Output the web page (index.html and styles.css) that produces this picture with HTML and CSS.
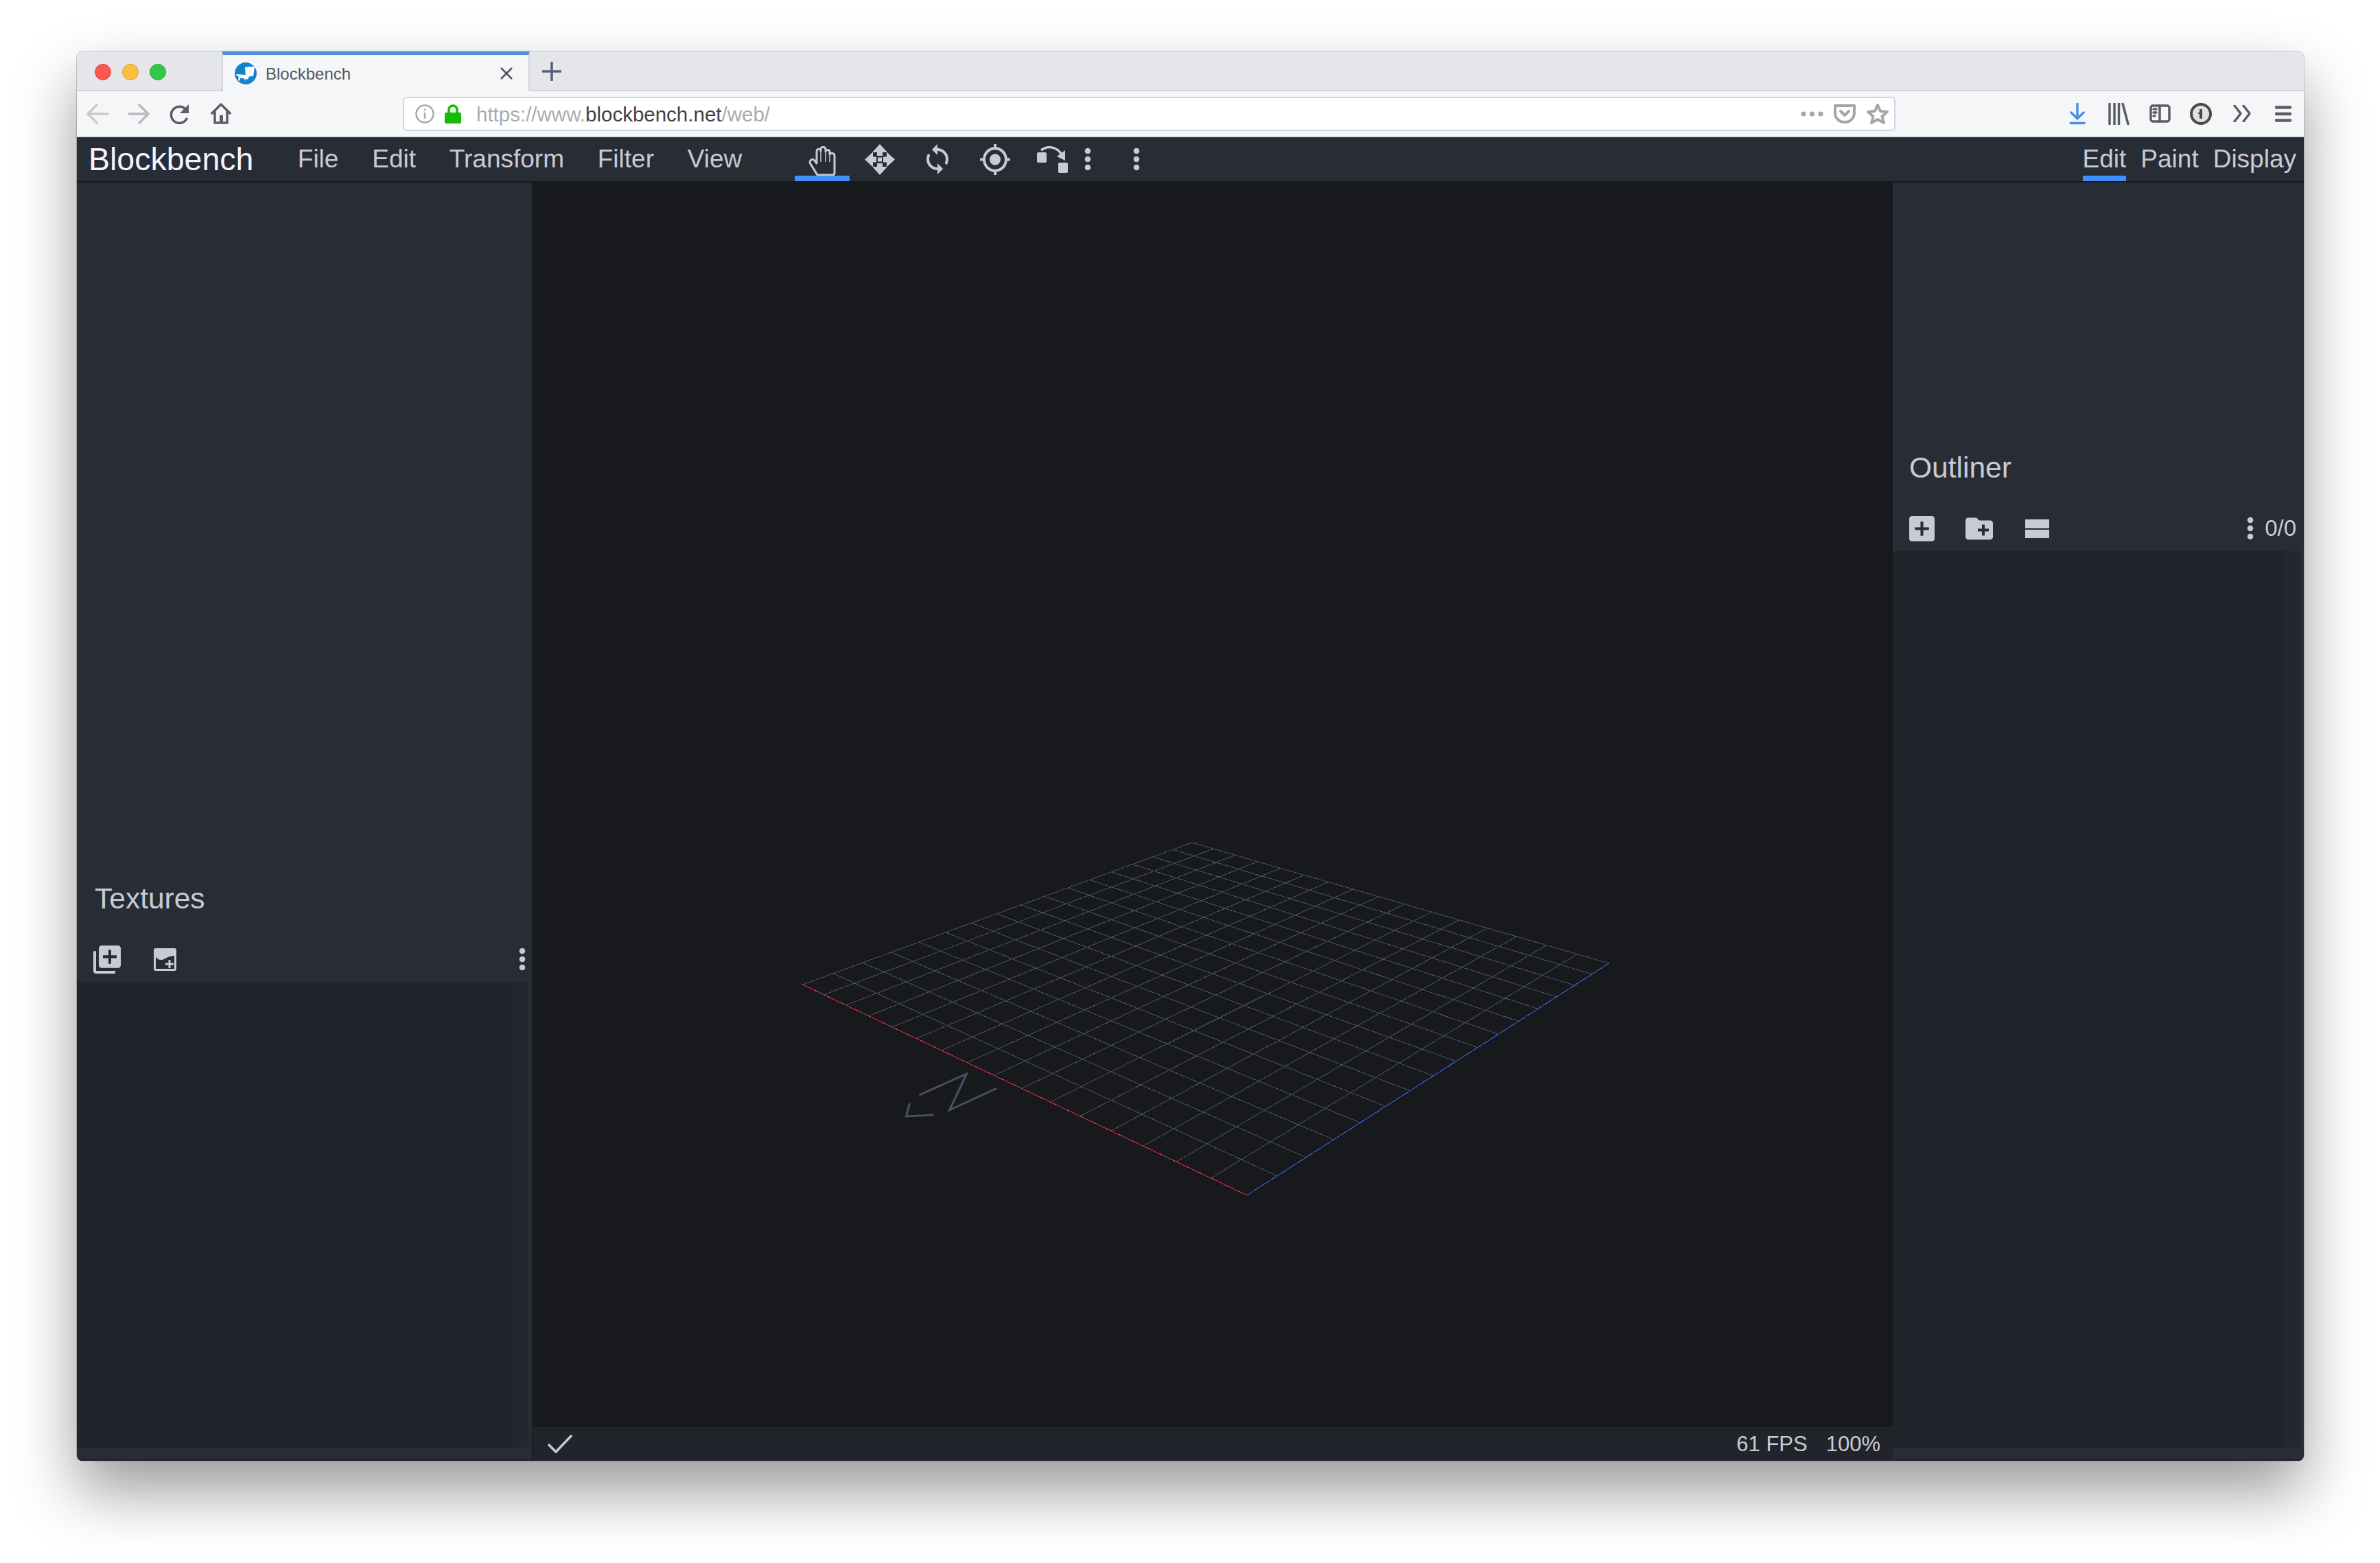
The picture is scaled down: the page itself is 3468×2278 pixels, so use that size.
FILE: index.html
```html
<!DOCTYPE html>
<html lang="en">
<head>
    <meta charset="UTF-8">
    <title>Blockbench</title>
    <link rel="stylesheet" href="styles.css">
</head>
<body>
    <div class="window">
        <!-- browser chrome -->
        <div class="tabstrip">
            <div class="traffic">
                <span class="light light-red"></span>
                <span class="light light-yellow"></span>
                <span class="light light-green"></span>
            </div>
            <div class="tab">
                <svg class="favicon" viewBox="0 0 32 32">
                    <circle cx="16" cy="16" r="16" fill="#1583cc"/>
                    <path fill="#fff" d="M15 7l14-1-2 14-11 1zM2 17l13 1 7 1-3 6-3-2v4l-3-4-5 0-1 4-2-1 1-5-3-2z"/>
                </svg>
                <span class="tab-title">Blockbench</span>
                <svg class="tab-close" viewBox="0 0 20 20"><path d="M2 2l16 16M18 2L2 18"/></svg>
            </div>
            <svg class="tab-new" viewBox="0 0 28 28"><path d="M14 1v26M1 14h26"/></svg>
        </div>

        <div class="navbar">
            <div class="nav-btn">
                <svg class="stroke-off" width="33" height="32" viewBox="0 0 33 32"><path d="M31 16H3M15 3L2 16l13 13"/></svg>
            </div>
            <div class="nav-btn">
                <svg class="stroke-off2" width="31" height="32" viewBox="0 0 31 32"><path d="M1 16h27M16 3l13 13-13 13"/></svg>
            </div>
            <div class="nav-btn">
                <svg class="stroke-grey" width="30" height="30" viewBox="0 0 30 30"><path d="M25 22a12 12 0 1 1-2-14"/><path class="solid" d="M28 1v13H15z"/></svg>
            </div>
            <div class="nav-btn">
                <svg class="stroke-grey" width="30" height="31" viewBox="0 0 30 31"><path d="M2 15L15 2l13 13M6 12v17h18V12"/><rect class="solid" x="13" y="18" width="5" height="11"/></svg>
            </div>

            <div class="urlbar">
                <svg class="url-info" viewBox="0 0 28 28">
                    <circle cx="14" cy="14" r="12.5"/>
                    <path d="M14 12v9"/>
                    <circle class="solid" cx="14" cy="8" r="1.6"/>
                </svg>
                <svg class="url-lock" viewBox="0 0 24 28">
                    <path d="M6 13V8a6 6 0 0 1 12 0v5"/>
                    <rect class="solid" y="12" width="24" height="16" rx="2"/>
                </svg>
                <div class="url-text">https://www.<span class="url-host">blockbench.net</span>/web/</div>
                <div class="url-action">
                    <svg width="33" height="8" viewBox="0 0 33 8" class="solid-grey"><circle cx="4" cy="4" r="3.6"/><circle cx="16.5" cy="4" r="3.6"/><circle cx="29" cy="4" r="3.6"/></svg>
                </div>
                <div class="url-action">
                    <svg class="stroke-light" width="32" height="28" viewBox="0 0 32 28"><path d="M2 2h28v11a14 13 0 0 1-28 0zM10 10l6 6 6-6"/></svg>
                </div>
                <div class="url-action">
                    <svg class="stroke-light" width="32" height="31" viewBox="0 0 32 31"><path d="M16 3l4 9 10 1-7.500 6.500L25 29l-9-5-9 5 2.500-9.500L2 13l10-1z"/></svg>
                </div>
            </div>

            <div class="nav-btn">
                <svg class="stroke-blue" width="24" height="32" viewBox="0 0 24 32"><path d="M12 0v23M3 14l9 9 9-9M2 29.500h20"/></svg>
            </div>
            <div class="nav-btn">
                <svg class="stroke-grey" width="31" height="32" viewBox="0 0 31 32"><path d="M2 1v30M9 1v30M15.500 1v30M21 1l8 30"/></svg>
            </div>
            <div class="nav-btn">
                <svg class="stroke-grey" width="31" height="27" viewBox="0 0 31 27"><rect x="2" y="2" width="27" height="23" rx="3"/><path d="M15 2v23M6 7h4M6 12h4M6 17h2"/></svg>
            </div>
            <div class="nav-btn">
                <svg width="32" height="32" viewBox="0 0 32 32"><circle cx="16" cy="16" r="14" fill="#e2e2e2" stroke="#4a4a4a" stroke-width="4"/><path fill="#4a4a4a" d="M14 9h4v14h-4zM12 14h3v2h-3z"/></svg>
            </div>
            <div class="nav-btn">
                <svg class="stroke-grey" width="27" height="25" viewBox="0 0 27 25"><path d="M2 1l9 11.500L2 24M15 1l9 11.500L15 24"/></svg>
            </div>
            <div class="nav-btn">
                <svg class="stroke-grey stroke-fat" width="24" height="24" viewBox="0 0 24 24"><path d="M2 2.500h20M2 12h20M2 21.500h20"/></svg>
            </div>
        </div>

        <!-- blockbench app -->
        <div class="app">
            <div class="menubar">
                <div class="logo">Blockbench</div>
                <div class="menu">
                    <div class="menu-item">File</div>
                    <div class="menu-item">Edit</div>
                    <div class="menu-item">Transform</div>
                    <div class="menu-item">Filter</div>
                    <div class="menu-item">View</div>
                </div>
                <div class="tools">
                    <div class="tool tool-active">
                        <svg class="hand" width="40" height="43" viewBox="0 0 40 43">
                            <path d="M13 42L3 26c-3-5 3-9 6-5l3 4V8c0-5 6-5 6-1V5c0-5 7-5 7 0v3c1-4 6-3 6 1v3c2-3 7-2 7 2v24c0 2-1 4-3 4z"/>
                            <path class="hand-thin" d="M18 7v16M25 7v16M31 10v13"/>
                        </svg>
                    </div>
                    <div class="tool">
                        <svg class="icon" width="44" height="45" viewBox="0 0 44 45">
                            <path d="M22 0l11 12h-7v5h-8v-5h-7zM22 45l11-12h-7v-5h-8v5h-7zM0 22.500l12-11v7h5v8h-5v7zM44 22.500l-12-11v7h-5v8h5v7z"/>
                            <rect x="19" y="19.500" width="6" height="6"/>
                        </svg>
                    </div>
                    <div class="tool">
                        <svg class="icon" width="32" height="44" viewBox="4 1 16 22" preserveAspectRatio="none">
                            <path d="M12 4V1L8 5l4 4V6c3.310 0 6 2.690 6 6 0 1.010-.25 1.970-.7 2.800l1.460 1.460C19.540 15.030 20 13.570 20 12c0-4.420-3.580-8-8-8zm0 14c-3.310 0-6-2.690-6-6 0-1.010.25-1.970.7-2.800L5.240 7.740C4.460 8.970 4 10.430 4 12c0 4.420 3.580 8 8 8v3l4-4-4-4v3z"/>
                        </svg>
                    </div>
                    <div class="tool">
                        <svg class="icon" width="44" height="45" viewBox="1 1 22 22" preserveAspectRatio="none">
                            <path d="M12 8c-2.210 0-4 1.790-4 4s1.790 4 4 4 4-1.790 4-4-1.790-4-4-4zm8.940 3c-.46-4.170-3.770-7.480-7.940-7.940V1h-2v2.060C6.830 3.520 3.520 6.830 3.060 11H1v2h2.060c.46 4.170 3.770 7.480 7.940 7.940V23h2v-2.060c4.170-.46 7.480-3.770 7.940-7.940H23v-2h-2.060zM12 19c-3.870 0-7-3.130-7-7s3.130-7 7-7 7 3.130 7 7-3.130 7-7 7z"/>
                        </svg>
                    </div>
                    <div class="tool">
                        <svg class="icon" width="45" height="39" viewBox="0 0 45 39">
                            <rect y="9" width="14" height="15" rx="2"/>
                            <rect x="31" y="24" width="14" height="15" rx="2"/>
                            <path class="pivot-arc" d="M6 6C15-1 28 0 36 12"/>
                            <path d="M41 6v15L29 15z"/>
                        </svg>
                    </div>
                    <svg class="dots tool-dots" viewBox="0 0 10 34"><circle cx="5" cy="5" r="4.300"/><circle cx="5" cy="17" r="4.300"/><circle cx="5" cy="29" r="4.300"/></svg>
                    <svg class="dots tool-dots tool-dots-last" viewBox="0 0 10 34"><circle cx="5" cy="5" r="4.300"/><circle cx="5" cy="17" r="4.300"/><circle cx="5" cy="29" r="4.300"/></svg>
                </div>
                <div class="modes">
                    <div class="mode mode-active">Edit</div>
                    <div class="mode">Paint</div>
                    <div class="mode">Display</div>
                </div>
            </div>

            <div class="workspace">
                <div class="panel panel-left">
                    <div class="panel-head">
                        <h3 class="panel-title">Textures</h3>
                        <div class="panel-tools">
                            <div class="panel-btn">
                                <svg class="icon" width="40" height="41" viewBox="2 2 20 20" preserveAspectRatio="none">
                                    <path d="M4 6H2v14c0 1.100.9 2 2 2h14v-2H4V6zm16-4H8c-1.100 0-2 .9-2 2v12c0 1.100.9 2 2 2h12c1.100 0 2-.9 2-2V4c0-1.100-.9-2-2-2zm-1 9h-4v4h-2v-4H9V9h4V5h2v4h4v2z"/>
                                </svg>
                            </div>
                            <div class="panel-btn">
                                <svg width="33" height="33" viewBox="0 0 33 33">
                                    <rect class="icon-fill" width="33" height="33" rx="3"/>
                                    <path class="icon-cut" d="M3 13c4 5 9 5 14 2 5-3 9-4 13-4v19H3z"/>
                                    <path class="icon-plus" d="M23 17v12M17 23h12"/>
                                </svg>
                            </div>
                            <svg class="dots panel-dots" viewBox="0 0 10 34"><circle cx="5" cy="5" r="4.300"/><circle cx="5" cy="17" r="4.300"/><circle cx="5" cy="29" r="4.300"/></svg>
                        </div>
                    </div>
                    <div class="panel-list"></div>
                </div>

                <div class="center">
                    <div class="preview">
                        <svg class="grid" id="grid" viewBox="777 266 1980 1814">
                            <path class="gizmo" d="M1339 1596l69-31-25 53 69-32M1325 1608l-5 19 40-2"/>
                        </svg>
                    </div>
                    <div class="statusbar">
                        <svg class="status-check" width="37" height="27" viewBox="0 0 37 27"><path d="M1 14l11 11L35 1"/></svg>
                        <div class="status-fps">61 FPS</div>
                        <div class="status-zoom">100%</div>
                    </div>
                </div>

                <div class="panel panel-right">
                    <div class="panel-head">
                        <h3 class="panel-title">Outliner</h3>
                        <div class="panel-tools">
                            <div class="panel-btn">
                                <svg class="icon" width="37" height="37" viewBox="3 3 18 18">
                                    <path d="M19 3H5c-1.110 0-2 .9-2 2v14c0 1.100.89 2 2 2h14c1.100 0 2-.9 2-2V5c0-1.100-.9-2-2-2zm-2 10h-4v4h-2v-4H7v-2h4V7h2v4h4v2z"/>
                                </svg>
                            </div>
                            <div class="panel-btn">
                                <svg class="icon" width="40" height="33" viewBox="2 4 20 16">
                                    <path d="M20 6h-8l-2-2H4c-1.110 0-1.990.89-1.990 2L2 18c0 1.110.89 2 2 2h16c1.110 0 2-.89 2-2V8c0-1.110-.89-2-2-2zm-1 8h-3v3h-2v-3h-3v-2h3V9h2v3h3v2z"/>
                                </svg>
                            </div>
                            <div class="panel-btn">
                                <svg class="icon" width="35" height="27" viewBox="0 0 35 27"><rect width="35" height="13"/><rect y="15" width="35" height="12"/></svg>
                            </div>
                            <svg class="dots panel-dots" viewBox="0 0 10 34"><circle cx="5" cy="5" r="4.300"/><circle cx="5" cy="17" r="4.300"/><circle cx="5" cy="29" r="4.300"/></svg>
                            <div class="panel-count">0/0</div>
                        </div>
                    </div>
                    <div class="panel-list"></div>
                </div>
            </div>
        </div>
    </div>
    <script src="grid.js"></script>
</body>
</html>
```

FILE: styles.css
```css
* {
    box-sizing: border-box;
}

html, body {
    height: 100%;
}

body {
    margin: 0;
    padding: 75px 111px 149px 112px;
    background: #ffffff;
    font-family: 'Liberation Sans', sans-serif;
    color: #cacad4;
}

svg {
    display: block;
    flex: none;
}

.window {
    display: flex;
    flex-direction: column;
    height: 100%;
    border-radius: 10px 10px 8px 8px;
    overflow: hidden;
    box-shadow: 0 44px 90px rgba(0, 0, 0, 0.4), 0 0 0 1px rgba(0, 0, 0, 0.18);
}

/* browser chrome */
.tabstrip {
    display: flex;
    align-items: stretch;
    height: 58px;
    background: #e5e6ea;
    border-bottom: 2px solid #d2d3d7;
}

.traffic {
    display: flex;
    align-items: center;
    gap: 16px;
    width: 211px;
    padding: 4px 0 0 26px;
}

.light {
    width: 24px;
    height: 24px;
    border-radius: 50%;
}

.light-red {
    background: #fc5753;
    border: 1px solid #df4744;
}

.light-yellow {
    background: #fdbc40;
    border: 1px solid #de9f34;
}

.light-green {
    background: #33c748;
    border: 1px solid #27aa35;
}

.tab {
    display: flex;
    align-items: center;
    width: 449px;
    height: 58px;
    padding-left: 17px;
    background: #f5f6f8;
    border-top: 5px solid #4f90e3;
    border-left: 2px solid #d2d3d7;
    border-right: 2px solid #d2d3d7;
}

.favicon {
    width: 32px;
    height: 32px;
}

.tab-title {
    margin-left: 13px;
    padding-top: 2px;
    font-size: 24px;
    color: #54565f;
}

.tab-close {
    width: 20px;
    height: 20px;
    margin-left: auto;
    margin-right: 22px;
    fill: none;
    stroke: #55575f;
    stroke-width: 2.5;
}

.tab-new {
    width: 28px;
    height: 28px;
    margin: 15px 0 0 18px;
    fill: none;
    stroke: #56607a;
    stroke-width: 3.5;
    stroke-linecap: round;
}

.navbar {
    display: flex;
    align-items: center;
    height: 67px;
    background: #f5f6f8;
    border-bottom: 2px solid #e2e3e7;
}

.nav-btn {
    display: flex;
    align-items: center;
    justify-content: center;
    width: 60px;
    height: 100%;
}

.stroke-off, .stroke-off2, .stroke-grey, .stroke-light, .stroke-blue {
    fill: none;
    stroke-width: 3.5;
    stroke-linecap: round;
    stroke-linejoin: round;
}

.stroke-off {
    stroke: #c9cacd;
}

.stroke-off2 {
    stroke: #b8b9bd;
}

.stroke-grey {
    stroke: #5b5d67;
}

.stroke-grey .solid {
    fill: #5b5d67;
    stroke: none;
}

.stroke-fat {
    stroke-width: 4.5;
}

.stroke-light {
    stroke: #a4a6ab;
    stroke-width: 4;
}

.stroke-blue {
    stroke: #4a90e6;
}

.solid-grey {
    fill: #a4a6ab;
}

.urlbar {
    display: flex;
    align-items: center;
    flex: 1;
    height: 50px;
    margin: 0 235px;
    padding-left: 16px;
    background: #ffffff;
    border: 2px solid #ced5e3;
    border-radius: 6px;
}

.url-info {
    width: 28px;
    height: 28px;
    fill: none;
    stroke: #a6a8ad;
    stroke-width: 2.5;
}

.url-info .solid {
    fill: #a6a8ad;
    stroke: none;
}

.url-lock {
    width: 24px;
    height: 28px;
    margin-left: 15px;
    fill: none;
    stroke: #12bc00;
    stroke-width: 3.5;
}

.url-lock .solid {
    fill: #12bc00;
    stroke: none;
}

.url-text {
    flex: 1;
    margin-left: 22px;
    padding-top: 2px;
    font-size: 29.5px;
    color: #a9abb1;
}

.url-host {
    color: #3f4149;
}

.url-action {
    display: flex;
    align-items: center;
    justify-content: center;
    width: 48px;
}

/* app */
.app {
    display: flex;
    flex-direction: column;
    flex: 1;
    min-height: 0;
    background: #282c34;
}

.menubar {
    display: flex;
    align-items: stretch;
    height: 66px;
    padding-left: 17px;
    background: #282c34;
    border-bottom: 2px solid #181a1f;
    font-size: 37px;
    line-height: 64px;
}

.logo {
    font-size: 46.5px;
    color: #f4f3ff;
}

.menu {
    display: flex;
    margin-left: 40px;
}

.menu-item {
    padding: 0 24.4px;
}

.tools {
    display: flex;
    align-items: stretch;
    margin-left: 50px;
}

.tool {
    display: flex;
    align-items: center;
    justify-content: center;
    width: 80px;
    height: 64px;
    margin: 0 2px;
}

.tool-active {
    align-items: flex-start;
    padding-top: 13px;
    border-bottom: 8px solid #3e90ff;
}

.hand {
    fill: none;
    stroke: #cacad4;
    stroke-width: 3;
    stroke-linejoin: round;
}

.hand-thin {
    stroke-width: 1.5;
}

.icon {
    fill: #cacad4;
}

.pivot-arc {
    fill: none;
    stroke: #cacad4;
    stroke-width: 3.5;
}

.icon-fill {
    fill: #cacad4;
}

.icon-cut {
    fill: #282c34;
}

.icon-plus {
    fill: none;
    stroke: #cacad4;
    stroke-width: 3;
}

.dots {
    width: 10px;
    height: 34px;
    fill: #cacad4;
}

.tool-dots {
    align-self: center;
    margin-left: 4px;
}

.tool-dots-last {
    margin-left: 61px;
}

.modes {
    display: flex;
    gap: 21px;
    margin-left: auto;
    padding-right: 11px;
}

.mode {
    height: 64px;
}

.mode-active {
    border-bottom: 8px solid #3e90ff;
}

.workspace {
    display: flex;
    flex: 1;
    min-height: 0;
}

.panel {
    display: flex;
    flex-direction: column;
    flex: none;
    padding-bottom: 17px;
    background: #282c34;
    border-bottom: 2px solid #1c1f25;
}

.panel-left {
    width: 663px;
}

.panel-right {
    width: 599px;
}

.panel-left .panel-head {
    height: 1165px;
}

.panel-right .panel-head {
    height: 537px;
}

.panel-head {
    display: flex;
    flex-direction: column;
    justify-content: flex-end;
    flex: none;
}

.panel-title {
    margin: 0 0 30px 26px;
    font-size: 42.5px;
    font-weight: normal;
    line-height: 50px;
}

.panel-right .panel-title {
    margin-left: 24px;
}

.panel-tools {
    display: flex;
    align-items: center;
    height: 66px;
}

.panel-left .panel-tools {
    padding: 0 9px 0 2px;
}

.panel-right .panel-tools {
    padding-right: 11px;
}

.panel-btn {
    display: flex;
    align-items: center;
    justify-content: center;
    width: 84px;
}

.panel-dots {
    margin-left: auto;
}

.panel-count {
    margin-left: 16px;
    font-size: 33px;
}

.panel-list {
    flex: 1;
    margin-right: 5px;
    background: #21252b;
    border-right: 22px solid #23272e;
}

.center {
    display: flex;
    flex-direction: column;
    flex: 1;
    min-width: 0;
    border-left: 2px solid #181a1f;
}

.preview {
    height: 1814px;
    flex: none;
    background: #17191d;
}

.grid {
    width: 100%;
    height: 100%;
}

.grid-line {
    stroke: #495061;
    stroke-width: 1;
    fill: none;
    shape-rendering: crispEdges;
}

.grid-x {
    stroke: #e8304a;
}

.grid-z {
    stroke: #3569e4;
}

.gizmo {
    fill: none;
    stroke: #495061;
    stroke-width: 3;
}

.statusbar {
    display: flex;
    align-items: center;
    gap: 27px;
    flex: 1;
    padding: 0 18px 0 21px;
    background: #21252b;
    font-size: 31px;
}

.status-check {
    margin-right: auto;
    fill: none;
    stroke: #cacad4;
    stroke-width: 3.5;
}
```

FILE: grid.js
```js
// floor grid, 16 x 16 cells in perspective. corners measured off the viewport
const SVG_NS = 'http://www.w3.org/2000/svg';
const CELLS = 16;
const [x0, y0, x1, y1, x2, y2, x3, y3] = [1169, 1435, 1736.5, 1228, 2344, 1404, 1816.5, 1742];

const dx1 = x1 - x2, dx2 = x3 - x2, sx = x0 - x1 + x2 - x3;
const dy1 = y1 - y2, dy2 = y3 - y2, sy = y0 - y1 + y2 - y3;
const det = dx1 * dy2 - dx2 * dy1;
const g = (sx * dy2 - dx2 * sy) / det;
const h = (dx1 * sy - sx * dy1) / det;

function project(u, v) {
    const w = g * u + h * v + 1;
    return [
        ((x1 - x0 + g * x1) * u + (x3 - x0 + h * x3) * v + x0) / w,
        ((y1 - y0 + g * y1) * u + (y3 - y0 + h * y3) * v + y0) / w
    ];
}

function addLine(from, to, cls) {
    const line = document.createElementNS(SVG_NS, 'line');
    line.setAttribute('x1', from[0]);
    line.setAttribute('y1', from[1]);
    line.setAttribute('x2', to[0]);
    line.setAttribute('y2', to[1]);
    line.setAttribute('class', cls);
    document.getElementById('grid').appendChild(line);
}

for (let i = 0; i <= CELLS; i++) {
    const t = i / CELLS;
    if (i > 0) addLine(project(t, 0), project(t, 1), 'grid-line');
    if (i < CELLS) addLine(project(0, t), project(1, t), 'grid-line');
}

addLine(project(0, 0), project(0, 1), 'grid-line grid-x');
addLine(project(0, 1), project(1, 1), 'grid-line grid-z');
```
